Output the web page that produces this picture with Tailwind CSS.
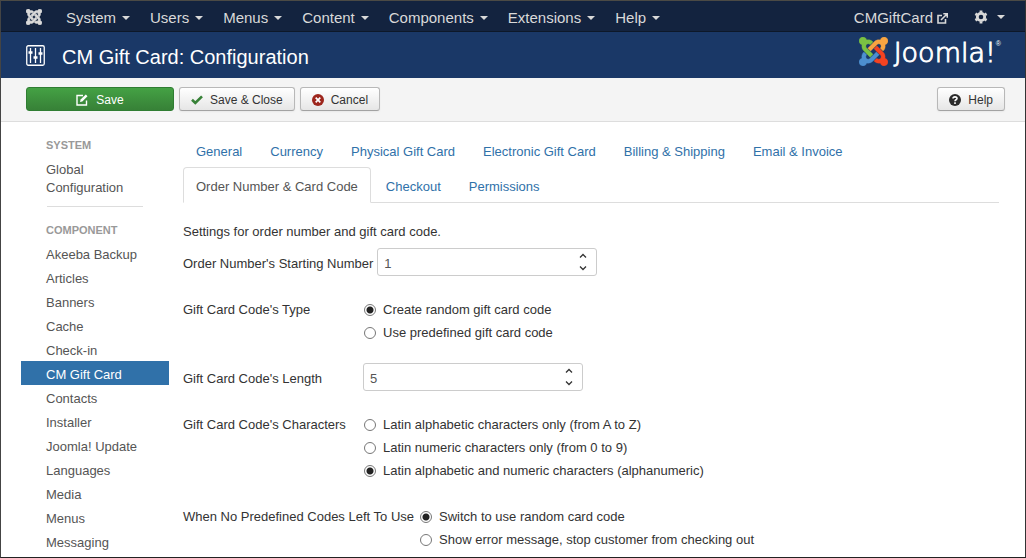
<!DOCTYPE html>
<html lang="en">
<head>
<meta charset="utf-8">
<meta name="viewport" content="width=device-width, initial-scale=1">
<title>CM Gift Card: Configuration</title>
<script src="https://cdn.jsdelivr.net/npm/@tailwindcss/browser@4"></script>
</head>
<body class="flex min-h-screen flex-col border border-t-[#4b4a45] border-r-[#333333] border-b-[#222222] border-l-[#444444] bg-white font-['Liberation_Sans',Arial,sans-serif] text-[13px] leading-[18px] text-[#333333]">
<svg class="hidden" aria-hidden="true">
  <symbol id="arm" viewBox="0 0 24 24"><path d="M16.719 14.759L14.22 17.26l-2.37 2.37-.462.466c-1.368 1.365-3.297 1.83-5.047 1.397-.327 1.424-1.604 2.49-3.13 2.49C1.44 23.983 0 22.547 0 20.77c0-1.518 1.055-2.789 2.469-3.123-.446-1.76.016-3.705 1.396-5.08l.179-.18 2.37 2.37-.184.181c-.769.779-.769 2.024 0 2.789.771.78 2.022.78 2.787 0l.465-.465 2.367-2.371 2.502-2.506z"/></symbol>
  <symbol id="caret" viewBox="0 0 8 4"><path d="M0 0h8L4 4z" fill="#d9d9d9"/></symbol>
  <symbol id="spin" viewBox="0 0 8 18"><path d="M1 4.5L4 1.500l3 3M1 13.500l3 3 3-3" fill="none" stroke="#333" stroke-width="1.300"/></symbol>
</svg>

<nav class="flex h-[31px] items-center border-b border-[#0d1829] bg-[#13233f] pr-5 pl-[25px] text-[15px] leading-5 text-[#d9d9d9]">
  <a href="#" aria-label="Joomla" class="mr-6 pt-px">
    <svg class="size-4" viewBox="0 0 24 24" fill="#d9d9d9" stroke="#d9d9d9" stroke-width=".9"><use href="#arm"/><use href="#arm" transform="rotate(90 12 12)"/><use href="#arm" transform="rotate(180 12 12)"/><use href="#arm" transform="rotate(270 12 12)"/></svg>
  </a>
  <div class="flex flex-1 gap-5 pt-1">
    <a href="#" class="flex items-center gap-[6px]">System<svg class="h-1 w-2"><use href="#caret"/></svg></a>
    <a href="#" class="flex items-center gap-[6px]">Users<svg class="h-1 w-2"><use href="#caret"/></svg></a>
    <a href="#" class="flex items-center gap-[6px]">Menus<svg class="h-1 w-2"><use href="#caret"/></svg></a>
    <a href="#" class="flex items-center gap-[6px]">Content<svg class="h-1 w-2"><use href="#caret"/></svg></a>
    <a href="#" class="flex items-center gap-[6px]">Components<svg class="h-1 w-2"><use href="#caret"/></svg></a>
    <a href="#" class="flex items-center gap-[6px]">Extensions<svg class="h-1 w-2"><use href="#caret"/></svg></a>
    <a href="#" class="flex items-center gap-[6px]">Help<svg class="h-1 w-2"><use href="#caret"/></svg></a>
  </div>
  <a href="#" class="mr-[26px] flex items-center gap-1 pt-1">CMGiftCard
    <svg class="size-[11px]" viewBox="0 0 11 11" fill="none" stroke="#d9d9d9" stroke-width="1.600"><path d="M5 2.500H1v7.500h7.500V6M4 7l5.500-5.500M6.300.8h4v4"/></svg>
  </a>
  <a href="#" aria-label="Settings" class="flex items-center gap-[9px] pt-0.5">
    <svg class="size-[14px]" viewBox="0 0 14 14" fill="none" stroke="#d9d9d9"><circle cx="7" cy="7" r="3.700" stroke-width="2.800"/><path d="M7 .5v2M7 11.500v2M1.400 3.750l1.700 1M10.900 9.250l1.700 1M1.400 10.250l1.700-1M10.900 4.750l1.700-1" stroke-width="2.800"/></svg>
    <svg class="h-1 w-2"><use href="#caret"/></svg>
  </a>
</nav>

<header class="flex h-[46px] items-center bg-[#1a3867] pr-6 pl-[25px] text-white">
  <svg class="mr-[17px] h-[21px] w-[19px]" viewBox="0 0 19 21" fill="none" stroke="#fff"><rect x=".75" y=".75" width="17.500" height="19.500" rx="1.500" stroke-width="1.300"/><path d="M4.500 3v15M9.500 3v15M14.500 3v15" stroke-width="1.300"/><path d="M2.500 7.500h4M7.500 12.500h4M12.500 8.500h4" stroke-width="2.500"/></svg>
  <h1 class="flex-1 pt-1 text-xl leading-6">CM Gift Card: Configuration</h1>
  <a href="#" class="mb-[7px] flex items-center" aria-label="Joomla!">
    <svg class="mr-[6px] size-[29px] overflow-visible" viewBox="0 0 24 24" stroke-width=".3"><use href="#arm" fill="#4d8fcf" stroke="#4d8fcf"/><use href="#arm" fill="#7ac143" stroke="#7ac143" transform="rotate(90 12 12)"/><use href="#arm" fill="#f9a541" stroke="#f9a541" transform="rotate(180 12 12)"/><use href="#arm" fill="#f44321" stroke="#f44321" transform="rotate(270 12 12)"/></svg>
    <span class="pt-0.5 font-['DejaVu_Sans',sans-serif] text-[27px] leading-7 font-extralight [-webkit-text-stroke:1px_#ffffff]">Joomla!</span><sup class="-top-2 text-[7px] leading-none">®</sup>
  </a>
</header>

<div class="flex items-start gap-[5px] border-b border-[#dddddd] bg-[#f4f4f4] pt-[9px] pr-5 pb-[10px] pl-[25px] text-xs leading-[22px]">
  <button class="flex h-6 w-[148px] items-center justify-center gap-2 rounded-[3px] border border-[#2f7d32] bg-linear-to-b from-[#44a144] to-[#378137] pt-px text-white">
    <svg class="size-3" viewBox="0 0 12 12" fill="none" stroke="#fff" stroke-width="1.400"><path d="M7 1.500H1v9.500h9.500V6.500"/><path d="M4 8l.6-2.400L9.800.5l1.700 1.700L6.300 7.400z" fill="#fff" stroke="none"/></svg>Save</button>
  <button class="flex h-6 items-center gap-[7px] rounded-[3px] border border-[#b8b8b8] border-b-[#a2a2a2] bg-linear-to-b from-white to-[#e6e6e6] px-[11px] pt-px shadow-xs">
    <svg class="h-[10px] w-3" viewBox="0 0 12 10" fill="none" stroke="#378137" stroke-width="2.600"><path d="M1 4.800l3.300 3.200L11 1.300"/></svg>Save &amp; Close</button>
  <button class="flex h-6 items-center gap-[7px] rounded-[3px] border border-[#b8b8b8] border-b-[#a2a2a2] bg-linear-to-b from-white to-[#e6e6e6] px-[11px] pt-px shadow-xs">
    <svg class="size-3" viewBox="0 0 12 12"><circle cx="6" cy="6" r="6" fill="#9d261d"/><path d="M3.700 3.700l4.600 4.600M8.300 3.700L3.700 8.300" stroke="#fff" stroke-width="1.700"/></svg>Cancel</button>
  <button class="ml-auto flex h-6 items-center gap-[7px] rounded-[3px] border border-[#b8b8b8] border-b-[#a2a2a2] bg-linear-to-b from-white to-[#e6e6e6] px-[11px] pt-px shadow-xs">
    <svg class="size-3" viewBox="0 0 12 12"><circle cx="6" cy="6" r="6" fill="#2b2b2b"/><path d="M4 4.600C4 2.300 8 2.300 8 4.500 8 5.900 6 5.700 6 7.200M6 8.300v1.600" fill="none" stroke="#fff" stroke-width="1.600"/></svg>Help</button>
</div>

<div class="flex gap-[14px] pr-[26px] pl-5">
  <aside class="w-[148px] shrink-0 pt-[14px] text-[#555555]">
    <h2 class="px-[25px] text-[11px] font-bold text-[#999999]">SYSTEM</h2>
    <a href="#" class="block px-[25px] pt-[7px] pb-[6px]">Global Configuration</a>
    <hr class="mx-[26px] mt-[3px] mb-[14px] border-[#dddddd]">
    <h2 class="px-[25px] pb-0.5 text-[11px] font-bold text-[#999999]">COMPONENT</h2>
    <ul class="whitespace-nowrap">
      <li><a href="#" class="block px-[25px] pt-[5px] pb-px">Akeeba Backup</a></li>
      <li><a href="#" class="block px-[25px] pt-[5px] pb-px">Articles</a></li>
      <li><a href="#" class="block px-[25px] pt-[5px] pb-px">Banners</a></li>
      <li><a href="#" class="block px-[25px] pt-[5px] pb-px">Cache</a></li>
      <li><a href="#" class="block px-[25px] pt-[5px] pb-px">Check-in</a></li>
      <li><a href="#" class="block bg-[#3071a9] px-[25px] pt-[5px] pb-px text-white">CM Gift Card</a></li>
      <li><a href="#" class="block px-[25px] pt-[5px] pb-px">Contacts</a></li>
      <li><a href="#" class="block px-[25px] pt-[5px] pb-px">Installer</a></li>
      <li><a href="#" class="block px-[25px] pt-[5px] pb-px">Joomla! Update</a></li>
      <li><a href="#" class="block px-[25px] pt-[5px] pb-px">Languages</a></li>
      <li><a href="#" class="block px-[25px] pt-[5px] pb-px">Media</a></li>
      <li><a href="#" class="block px-[25px] pt-[5px] pb-px">Menus</a></li>
      <li><a href="#" class="block px-[25px] pt-[5px] pb-px">Messaging</a></li>
    </ul>
  </aside>

  <main class="min-w-0 flex-1 pt-[10px]">
    <ul class="mb-5 flex flex-wrap gap-x-0.5 border-b border-[#dddddd] text-[#3071a9]">
      <li class="-mb-px"><a href="#" class="block border border-transparent px-3 pt-[10px] pb-[6px]">General</a></li>
      <li class="-mb-px"><a href="#" class="block border border-transparent px-3 pt-[10px] pb-[6px]">Currency</a></li>
      <li class="-mb-px"><a href="#" class="block border border-transparent px-3 pt-[10px] pb-[6px]">Physical Gift Card</a></li>
      <li class="-mb-px"><a href="#" class="block border border-transparent px-3 pt-[10px] pb-[6px]">Electronic Gift Card</a></li>
      <li class="-mb-px"><a href="#" class="block border border-transparent px-3 pt-[10px] pb-[6px]">Billing &amp; Shipping</a></li>
      <li class="-mb-px"><a href="#" class="block border border-transparent px-3 pt-[10px] pb-[6px]">Email &amp; Invoice</a></li>
      <li class="-mb-px"><a href="#" class="block rounded-t border border-[#dddddd] border-b-white bg-white px-3 pt-[10px] pb-[6px] text-[#555555]">Order Number &amp; Card Code</a></li>
      <li class="-mb-px"><a href="#" class="block border border-transparent px-3 pt-[10px] pb-[6px]">Checkout</a></li>
      <li class="-mb-px"><a href="#" class="block border border-transparent px-3 pt-[10px] pb-[6px]">Permissions</a></li>
    </ul>

    <p class="mb-[7px]">Settings for order number and gift card code.</p>
    <form>
      <div class="mb-[22px] flex gap-1">
        <label for="start" class="min-w-[176px] pt-[7px]">Order Number's Starting Number</label>
        <div class="relative w-[220px]">
          <input id="start" type="number" value="1" class="h-7 w-full appearance-none rounded-[3px] border border-[#cccccc] px-[6px] pt-[3px] text-[#555555] [-moz-appearance:textfield] [&::-webkit-inner-spin-button]:appearance-none">
          <svg class="pointer-events-none absolute top-[5px] right-[10px] h-[18px] w-2"><use href="#spin"/></svg>
        </div>
      </div>

      <div role="radiogroup" aria-labelledby="type" class="mb-[19px] flex gap-[6px]">
        <span id="type" class="min-w-[175px] pt-[3px]">Gift Card Code's Type</span>
        <div class="leading-[23px]">
          <label class="flex items-center gap-[7px]"><input type="radio" name="type" checked class="size-3 appearance-none rounded-full border border-[#777777] bg-white checked:bg-[radial-gradient(circle,#222222_0_3px,#ffffff_4px)]">Create random gift card code</label>
          <label class="flex items-center gap-[7px]"><input type="radio" name="type" class="size-3 appearance-none rounded-full border border-[#777777] bg-white checked:bg-[radial-gradient(circle,#222222_0_3px,#ffffff_4px)]">Use predefined gift card code</label>
        </div>
      </div>

      <div class="mb-[22px] flex gap-1">
        <label for="length" class="min-w-[176px] pt-[7px]">Gift Card Code's Length</label>
        <div class="relative w-[220px]">
          <input id="length" type="number" value="5" class="h-7 w-full appearance-none rounded-[3px] border border-[#cccccc] px-[6px] pt-[3px] text-[#555555] [-moz-appearance:textfield] [&::-webkit-inner-spin-button]:appearance-none">
          <svg class="pointer-events-none absolute top-[5px] right-[10px] h-[18px] w-2"><use href="#spin"/></svg>
        </div>
      </div>

      <div role="radiogroup" aria-labelledby="chars" class="mb-[23px] flex gap-[6px]">
        <span id="chars" class="min-w-[175px] pt-[3px]">Gift Card Code's Characters</span>
        <div class="leading-[23px]">
          <label class="flex items-center gap-[7px]"><input type="radio" name="chars" class="size-3 appearance-none rounded-full border border-[#777777] bg-white checked:bg-[radial-gradient(circle,#222222_0_3px,#ffffff_4px)]">Latin alphabetic characters only (from A to Z)</label>
          <label class="flex items-center gap-[7px]"><input type="radio" name="chars" class="size-3 appearance-none rounded-full border border-[#777777] bg-white checked:bg-[radial-gradient(circle,#222222_0_3px,#ffffff_4px)]">Latin numeric characters only (from 0 to 9)</label>
          <label class="flex items-center gap-[7px]"><input type="radio" name="chars" checked class="size-3 appearance-none rounded-full border border-[#777777] bg-white checked:bg-[radial-gradient(circle,#222222_0_3px,#ffffff_4px)]">Latin alphabetic and numeric characters (alphanumeric)</label>
        </div>
      </div>

      <div role="radiogroup" aria-labelledby="fallback" class="flex gap-[6px]">
        <span id="fallback" class="min-w-[175px] pt-[3px]">When No Predefined Codes Left To Use</span>
        <div class="leading-[23px]">
          <label class="flex items-center gap-[7px]"><input type="radio" name="fallback" checked class="size-3 appearance-none rounded-full border border-[#777777] bg-white checked:bg-[radial-gradient(circle,#222222_0_3px,#ffffff_4px)]">Switch to use random card code</label>
          <label class="flex items-center gap-[7px]"><input type="radio" name="fallback" class="size-3 appearance-none rounded-full border border-[#777777] bg-white checked:bg-[radial-gradient(circle,#222222_0_3px,#ffffff_4px)]">Show error message, stop customer from checking out</label>
        </div>
      </div>
    </form>
  </main>
</div>
</body>
</html>
